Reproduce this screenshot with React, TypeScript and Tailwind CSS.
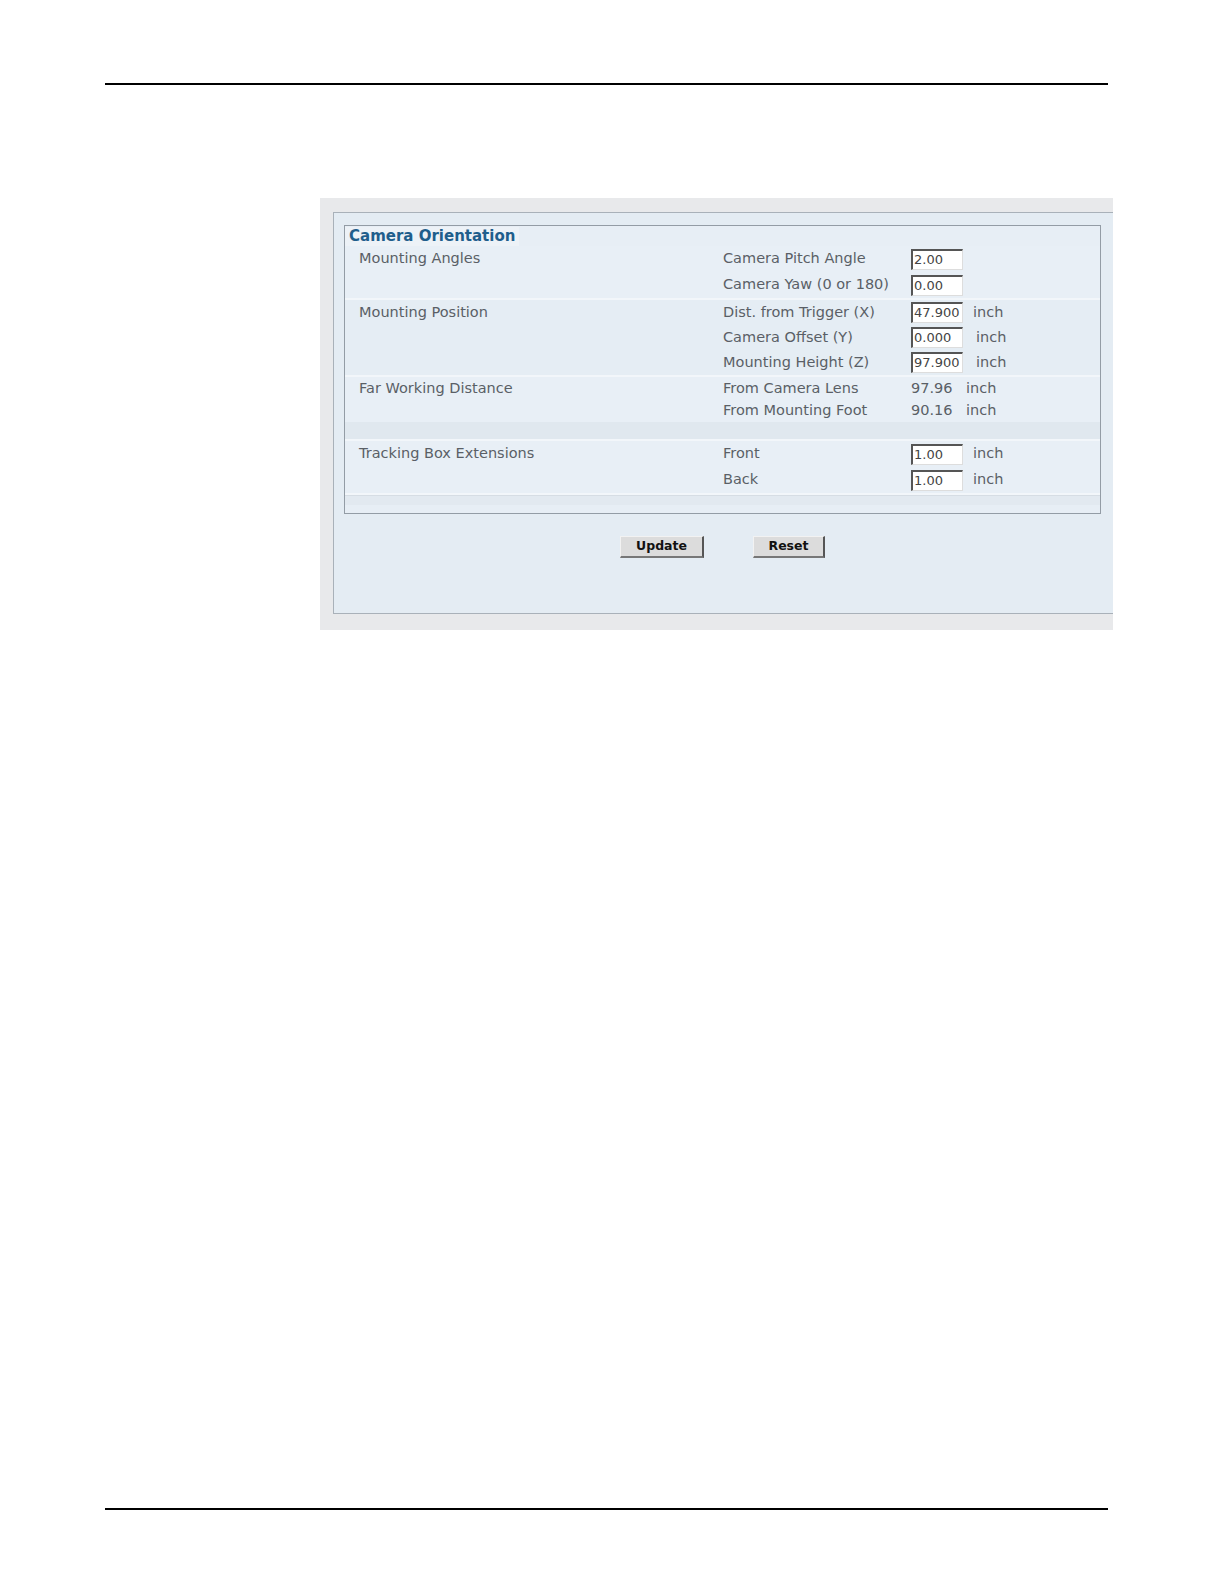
const font = { fontFamily: '"DejaVu Sans", Verdana, sans-serif' };

type Row = {
  group?: string;
  label: string;
  value?: string;
  input?: boolean;
  unit?: string;
  unitPad?: string;
};

function Field({ value }: { value: string }) {
  return (
    <div className="h-[21px] w-[52px] bg-white border-t-2 border-l-2 border-t-[#555] border-l-[#555] border-r border-b border-r-[#ddd] border-b-[#ddd] pl-[1px] text-[13px] leading-[17px] text-[#444]">
      {value}
    </div>
  );
}

function Line({ r, h }: { r: Row; h: string }) {
  return (
    <div className={`flex items-center ${h}`}>
      <div className="w-[378px] pl-[14px] text-[#5a5f66]">{r.group}</div>
      <div className="w-[188px] text-[#5a5f66]">{r.label}</div>
      <div className="w-[62px]">
        {r.input ? <Field value={r.value ?? ""} /> : <span className="text-[#5a5f66]">{r.value}</span>}
      </div>
      <div className={`text-[#5a5f66] ${r.unitPad ?? ""}`}>{r.unit}</div>
    </div>
  );
}

function Group({ rows, bg, h = "h-[26px]" }: { rows: Row[]; bg: string; h?: string }) {
  return (
    <div className={`${bg} border-b-2 border-b-[#f2f6fa]`}>
      {rows.map((r, i) => (
        <Line key={i} r={r} h={h} />
      ))}
    </div>
  );
}

export default function App() {
  return (
    <div className="bg-white w-full h-[1584px] overflow-hidden flex flex-col" style={font}>
      <div className="h-[83px] shrink-0" />
      <div className="ml-[105px] w-[1003px] h-[2px] bg-black shrink-0" />
      <div className="h-[113px] shrink-0" />

      <div className="ml-[320px] w-[793px] h-[432px] shrink-0 bg-[#e8e9eb] pt-[14px] pl-[13px] overflow-hidden">
        <div className="w-[820px] h-[402px] bg-[#e4ecf3] border-t border-l border-b border-[#a9b1b9] pt-[12px] pl-[10px]">
          <div className="w-[757px] h-[289px] border border-[#939ca5] bg-[#e7eef5] text-[14.5px]">
            <div className="h-[20px] flex items-center">
              <span className="pl-[4px] pr-[4px] bg-[#edf2f7] font-bold text-[15px] text-[#1f5e8c] leading-[19px]">
                Camera Orientation
              </span>
            </div>
            <Group
              bg="bg-[#e8eff6]"
              rows={[
                { group: "Mounting Angles", label: "Camera Pitch Angle", value: "2.00", input: true },
                { label: "Camera Yaw (0 or 180)", value: "0.00", input: true },
              ]}
            />
            <Group
              bg="bg-[#e5edf4]"
              h="h-[25px]"
              rows={[
                { group: "Mounting Position", label: "Dist. from Trigger (X)", value: "47.900", input: true, unit: "inch" },
                { label: "Camera Offset (Y)", value: "0.000", input: true, unit: "inch", unitPad: "pl-[3px]" },
                { label: "Mounting Height (Z)", value: "97.900", input: true, unit: "inch", unitPad: "pl-[3px]" },
              ]}
            />
            <div className="bg-[#e8eff6]">
              <div className="flex items-center h-[23px]">
                <div className="w-[378px] pl-[14px] text-[#5a5f66]">Far Working Distance</div>
                <div className="w-[188px] text-[#5a5f66]">From Camera Lens</div>
                <div className="w-[55px] text-[#5a5f66]">97.96</div>
                <div className="text-[#5a5f66]">inch</div>
              </div>
              <div className="flex items-center h-[22px]">
                <div className="w-[378px]" />
                <div className="w-[188px] text-[#5a5f66]">From Mounting Foot</div>
                <div className="w-[55px] text-[#5a5f66]">90.16</div>
                <div className="text-[#5a5f66]">inch</div>
              </div>
            </div>
            <div className="h-[19px] bg-[#e0e8ef] border-b-2 border-b-[#f2f6fa]" />
            <Group
              bg="bg-[#e8eff6]"
              rows={[
                { group: "Tracking Box Extensions", label: "Front", value: "1.00", input: true, unit: "inch" },
                { label: "Back", value: "1.00", input: true, unit: "inch" },
              ]}
            />
            <div className="h-[10px] bg-[#e2e9f0] border-t border-t-[#d6dde4]" />
          </div>

          <div className="flex w-[757px] mt-[22px]">
            <div className="ml-[276px] w-[84px] h-[22px] bg-[#dcdcdc] border-r-2 border-b-2 border-r-[#555] border-b-[#777] border-t border-l border-t-[#f2f2f2] border-l-[#f2f2f2] flex items-center justify-center text-[12.5px] font-bold text-[#111]">
              Update
            </div>
            <div className="ml-[49px] w-[72px] h-[22px] bg-[#dcdcdc] border-r-2 border-b-2 border-r-[#555] border-b-[#777] border-t border-l border-t-[#f2f2f2] border-l-[#f2f2f2] flex items-center justify-center text-[12.5px] font-bold text-[#111]">
              Reset
            </div>
          </div>
        </div>
      </div>

      <div className="flex-1" />
      <div className="ml-[105px] w-[1003px] h-[2px] bg-black shrink-0" />
      <div className="h-[74px] shrink-0" />
    </div>
  );
}
